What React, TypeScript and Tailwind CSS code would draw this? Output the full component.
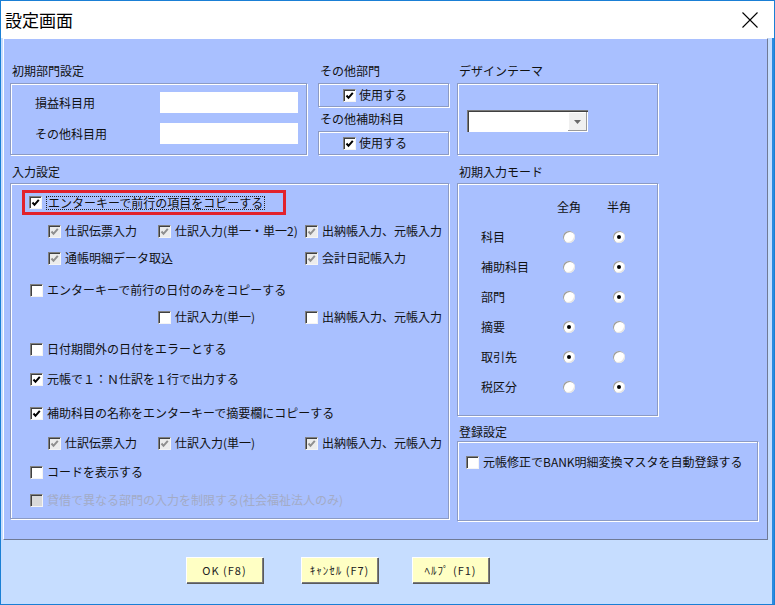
import React from "react"

const etched = "border border-[#8c9bc4] shadow-[inset_1px_1px_0_#ffffff,1px_1px_0_#ffffff]"

function Check({ checked = false, dim = false, off = false }: { checked?: boolean; dim?: boolean; off?: boolean }) {
  const bg = off ? "bg-[#d9d9d9]" : dim ? "bg-[#ececec]" : "bg-white"
  const stroke = dim ? "#8f8f8f" : "#000000"
  return (
    <span
      className={`inline-flex h-[13px] w-[13px] shrink-0 items-center justify-center border-t border-l border-t-[#808080] border-l-[#808080] border-r border-b border-r-[#f4f4f4] border-b-[#f4f4f4] shadow-[inset_1px_1px_0_#404040] ${bg}`}
    >
      {checked && (
        <svg width="9" height="9" viewBox="0 0 9 9">
          <polyline points="1.5,4.5 3.5,6.8 7.8,1.8" fill="none" stroke={stroke} strokeWidth="2" />
        </svg>
      )}
    </span>
  )
}

function Radio({ on = false }: { on?: boolean }) {
  return (
    <span className="inline-flex h-[12px] w-[12px] items-center justify-center rounded-full bg-white shadow-[inset_1px_1px_0_#9a9a9a,inset_-1px_-1px_0_#e4e4e4]">
      {on && <span className="h-[4px] w-[4px] rounded-full bg-black" />}
    </span>
  )
}

function Item({ checked = false, dim = false, off = false, children }: { checked?: boolean; dim?: boolean; off?: boolean; children: React.ReactNode }) {
  return (
    <div className="flex h-[16px] items-center gap-[4px] whitespace-nowrap">
      <Check checked={checked} dim={dim} off={off} />
      <span className={off ? "text-[#a3abc6]" : ""}>{children}</span>
    </div>
  )
}

function Label({ children }: { children: React.ReactNode }) {
  return <div className="h-[16px] pl-[2px] leading-[16px] whitespace-nowrap">{children}</div>
}

function Button({ children }: { children: React.ReactNode }) {
  return (
    <button className="flex h-[26px] w-[77px] items-center justify-center bg-[#ffffc4] text-[11px] font-normal tracking-[1px] text-[#222] shadow-[inset_1px_1px_0_#ffffff,inset_-1px_-1px_0_#7c7c7c,1px_1px_0_#5a5a5a]">
      {children}
    </button>
  )
}

const modes: [string, boolean][] = [
  ["科目", false],
  ["補助科目", false],
  ["部門", false],
  ["摘要", true],
  ["取引先", true],
  ["税区分", false],
]

export default function App() {
  return (
    <div className="flex h-[605px] w-[775px] flex-col overflow-hidden border border-[#1a7fd5] bg-[#c6ddff] font-['Noto_Sans_CJK_JP','Noto_Sans',sans-serif] text-[12px] text-[#111]">
      <div className="flex h-[37px] shrink-0 items-center justify-between bg-white">
        <span className="pl-[4px] text-[17px] leading-none text-black">設定画面</span>
        <svg className="mr-[16px]" width="16" height="16" viewBox="0 0 16 16">
          <path d="M0.5 0.5 L15.5 15.5 M15.5 0.5 L0.5 15.5" stroke="#000" strokeWidth="1.1" fill="none" />
        </svg>
      </div>

      <div className="flex flex-1 flex-col border-r-2 border-[#2a8be0] pl-[2px]">
        <div className="flex h-[502px] w-[765px] border-t border-l border-t-white border-l-white border-r border-b border-r-[#6f7a96] border-b-[#6f7a96] bg-[#a9c0ff] pt-[24px] pl-[6px]">
          {/* left column */}
          <div className="flex w-[439px] flex-col">
            <div className="flex">
              <div className="w-[297px]">
                <Label>初期部門設定</Label>
                <div className={`mt-[4px] h-[72px] pt-[8px] pl-[24px] ${etched}`}>
                  <div className="flex h-[21px] items-center">
                    <span className="w-[125px]">損益科目用</span>
                    <div className="h-[21px] w-[138px] bg-white" />
                  </div>
                  <div className="mt-[10px] flex h-[21px] items-center">
                    <span className="w-[125px]">その他科目用</span>
                    <div className="h-[21px] w-[138px] bg-white" />
                  </div>
                </div>
              </div>
              <div className="ml-[11px] w-[131px]">
                <Label>その他部門</Label>
                <div className={`mt-[4px] flex h-[24px] items-center gap-[3px] pl-[24px] ${etched}`}>
                  <Check checked />
                  <span>使用する</span>
                </div>
                <div className="mt-[4px]">
                  <Label>その他補助科目</Label>
                </div>
                <div className={`mt-[4px] flex h-[24px] items-center gap-[3px] pl-[24px] ${etched}`}>
                  <Check checked />
                  <span>使用する</span>
                </div>
              </div>
            </div>

            <div className="mt-[9px]">
              <Label>入力設定</Label>
            </div>
            <div className={`mt-[3px] h-[336px] ${etched}`}>
              <div className="mt-[6px] ml-[11px] flex h-[25px] w-[264px] items-center gap-[4px] border-[3px] border-[#e2222c] pl-[4px]">
                <Check checked />
                <span className="border border-dotted border-[#222] px-[1px] leading-[12px] whitespace-nowrap">
                  エンターキーで前行の項目をコピーする
                </span>
              </div>

              <div className="mt-[8px] grid grid-cols-[110px_147px_auto] pl-[37px]">
                <Item checked dim>仕訳伝票入力</Item>
                <Item checked dim>仕訳入力(単一・単一2)</Item>
                <Item checked dim>出納帳入力、元帳入力</Item>
              </div>
              <div className="mt-[11px] grid grid-cols-[257px_auto] pl-[37px]">
                <Item checked dim>通帳明細データ取込</Item>
                <Item checked dim>会計日記帳入力</Item>
              </div>

              <div className="mt-[16px] pl-[19px]">
                <Item>エンターキーで前行の日付のみをコピーする</Item>
              </div>
              <div className="mt-[11px] grid grid-cols-[110px_147px_auto] pl-[37px]">
                <div />
                <Item>仕訳入力(単一)</Item>
                <Item>出納帳入力、元帳入力</Item>
              </div>

              <div className="mt-[16px] pl-[19px]">
                <Item>日付期間外の日付をエラーとする</Item>
              </div>
              <div className="mt-[14px] pl-[19px]">
                <Item checked>元帳で１：Ｎ仕訳を１行で出力する</Item>
              </div>
              <div className="mt-[18px] pl-[19px]">
                <Item checked>補助科目の名称をエンターキーで摘要欄にコピーする</Item>
              </div>
              <div className="mt-[14px] grid grid-cols-[110px_147px_auto] pl-[37px]">
                <Item checked dim>仕訳伝票入力</Item>
                <Item checked dim>仕訳入力(単一)</Item>
                <Item checked dim>出納帳入力、元帳入力</Item>
              </div>
              <div className="mt-[13px] pl-[19px]">
                <Item>コードを表示する</Item>
              </div>
              <div className="mt-[12px] pl-[19px]">
                <Item off>貸借で異なる部門の入力を制限する(社会福祉法人のみ)</Item>
              </div>
            </div>
          </div>

          {/* right column */}
          <div className="ml-[8px] flex w-[301px] flex-col">
            <Label>デザインテーマ</Label>
            <div className={`mt-[4px] h-[72px] w-[201px] pt-[26px] pl-[9px] ${etched}`}>
              <div className="flex h-[22px] w-[121px] bg-white shadow-[inset_1px_1px_0_#7a7a7a,inset_2px_2px_0_#404040]">
                <div className="flex-1" />
                <div className="mt-[2px] mr-[1px] mb-[1px] flex w-[19px] items-center justify-center bg-[#f0f0f0] shadow-[inset_-1px_-1px_0_#9a9a9a,inset_1px_1px_0_#ffffff]">
                  <svg width="7" height="4" viewBox="0 0 7 4">
                    <path d="M0 0 L7 0 L3.5 4 Z" fill="#6a6a6a" />
                  </svg>
                </div>
              </div>
            </div>

            <div className="mt-[9px]">
              <Label>初期入力モード</Label>
            </div>
            <div className={`mt-[3px] h-[233px] w-[201px] pt-[15px] pl-[23px] ${etched}`}>
              <div className="grid grid-cols-[63px_50px_50px] gap-y-[14px]">
                <div className="h-[16px]" />
                <div className="flex h-[16px] items-center justify-center">全角</div>
                <div className="flex h-[16px] items-center justify-center">半角</div>
                {modes.map(([name, zen]) => (
                  <React.Fragment key={name}>
                    <div className="flex h-[16px] items-center">{name}</div>
                    <div className="flex h-[16px] items-center justify-center">
                      <Radio on={zen} />
                    </div>
                    <div className="flex h-[16px] items-center justify-center">
                      <Radio on={!zen} />
                    </div>
                  </React.Fragment>
                ))}
              </div>
            </div>

            <div className="mt-[8px]">
              <Label>登録設定</Label>
            </div>
            <div className={`mt-[1px] h-[80px] w-[301px] pt-[12px] pl-[8px] ${etched}`}>
              <Item>元帳修正でBANK明細変換マスタを自動登録する</Item>
            </div>
          </div>
        </div>

        <div className="flex pt-[17px] pl-[183px]">
          <Button>OK (F8)</Button>
          <div className="ml-[38px]">
            <Button>ｷｬﾝｾﾙ (F7)</Button>
          </div>
          <div className="ml-[34px]">
            <Button>ﾍﾙﾌﾟ (F1)</Button>
          </div>
        </div>
      </div>
    </div>
  )
}
